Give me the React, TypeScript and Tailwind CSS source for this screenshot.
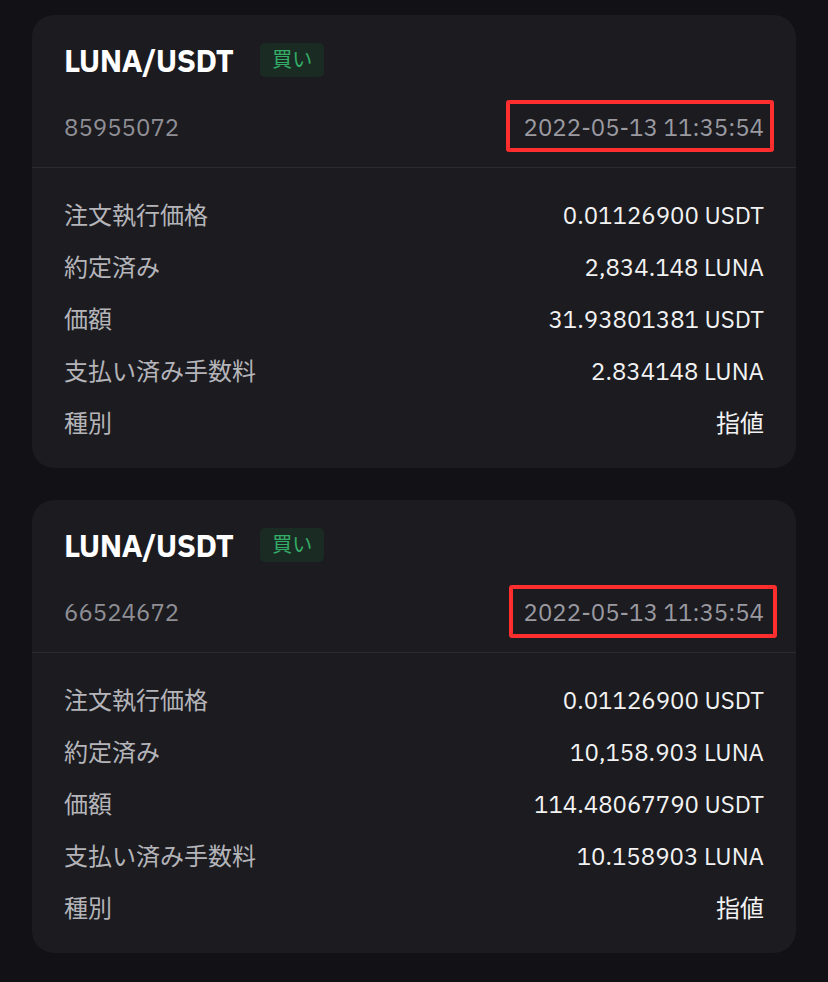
import React from "react";

type Row = { label: string; value: string };
type Order = { id: string; time: string; rows: Row[]; boxShift?: boolean };

const orders: Order[] = [
  {
    id: "85955072",
    time: "2022-05-13 11:35:54",
    rows: [
      { label: "注文執行価格", value: "0.01126900 USDT" },
      { label: "約定済み", value: "2,834.148 LUNA" },
      { label: "価額", value: "31.93801381 USDT" },
      { label: "支払い済み手数料", value: "2.834148 LUNA" },
      { label: "種別", value: "指値" },
    ],
  },
  {
    id: "66524672",
    time: "2022-05-13 11:35:54",
    boxShift: true,
    rows: [
      { label: "注文執行価格", value: "0.01126900 USDT" },
      { label: "約定済み", value: "10,158.903 LUNA" },
      { label: "価額", value: "114.48067790 USDT" },
      { label: "支払い済み手数料", value: "10.158903 LUNA" },
      { label: "種別", value: "指値" },
    ],
  },
];

const font = {
  fontFamily: '"IBM Plex Sans", Roboto, "Noto Sans CJK JP", sans-serif',
};

function Card({ o }: { o: Order }) {
  return (
    <div className="rounded-[22px] bg-[#1b1b20]">
      <div className="px-8 pt-7 pb-[23px] border-b border-[#2a2a30]">
        <div className="flex items-center h-[34px]">
          <span className="text-[31px] font-bold text-white tracking-[-0.6px] leading-none">
            LUNA/USDT
          </span>
          <span className="ml-[27px] h-[34px] px-[12px] flex items-center rounded-[5px] bg-[#1a2b23] text-[#34ad68] text-[20px]">
            買い
          </span>
        </div>
        <div className="mt-[33px] flex items-center justify-between h-[34px]">
          <span className="text-[24px] text-[#8f8f95]">{o.id}</span>
          <span className="relative text-[24px] text-[#9a9aa0]">
            {o.time}
            <span
              className={
                o.boxShift
                  ? "absolute -left-[15px] -right-[13px] -top-[9px] -bottom-[8px] border-[4px] border-[#ff2e2e] rounded-[3px]"
                  : "absolute -left-[18px] -right-[10px] -top-[9px] -bottom-[7px] border-[4px] border-[#ff2e2e] rounded-[3px]"
              }
            />
          </span>
        </div>
      </div>
      <div className="px-8 pt-[21px] pb-[19px]">
        {o.rows.map((r) => (
          <div key={r.label} className="flex items-center justify-between h-[52px]">
            <span className="text-[24px] text-[#b4b4b9]">{r.label}</span>
            <span className="text-[24px] text-[#f2f2f2]">{r.value}</span>
          </div>
        ))}
      </div>
    </div>
  );
}

export default function App() {
  return (
    <div className="min-h-[982px] bg-[#111116] px-8 pt-[15px] pb-8" style={font}>
      <div className="flex flex-col gap-8">
        {orders.map((o) => (
          <Card key={o.id} o={o} />
        ))}
      </div>
    </div>
  );
}
